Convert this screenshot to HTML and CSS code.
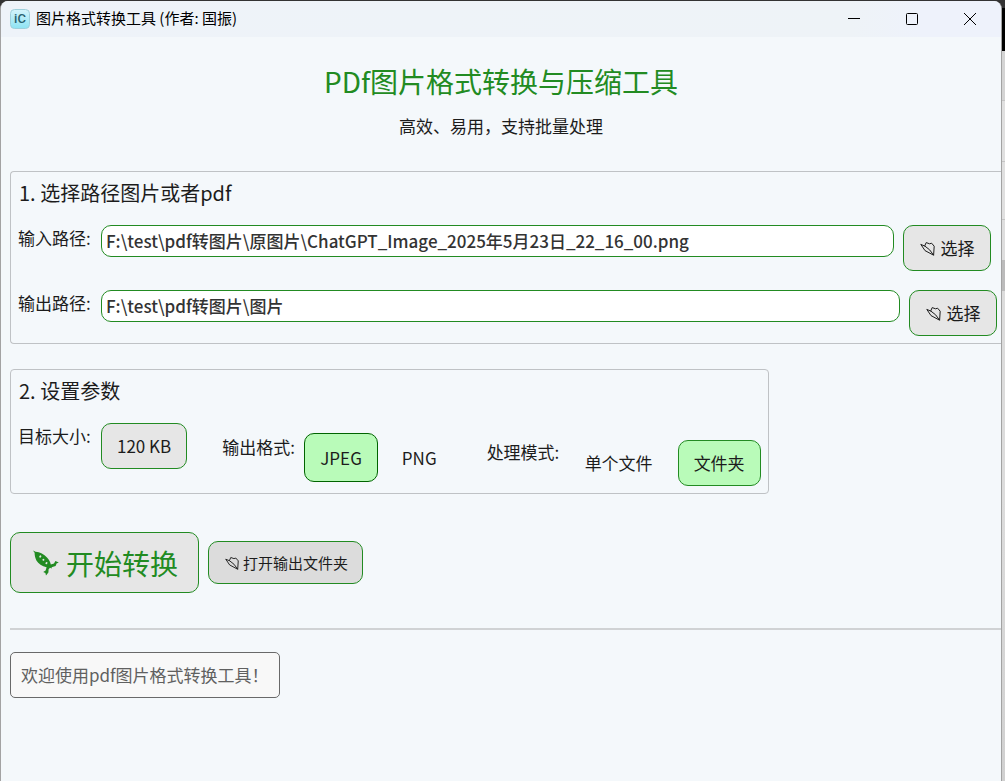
FILE: index.html
```html
<!DOCTYPE html>
<html lang="zh-CN">
<head>
<meta charset="utf-8">
<title>图片格式转换工具 (作者: 国振)</title>
<link rel="stylesheet" href="styles.css">
</head>
<body>
<svg class="defs" width="0" height="0" aria-hidden="true">
  <symbol id="folder" viewBox="0 0 15 15">
    <path d="M.8 3.4 5 9.6 13.6 14.2 14.2 5.2 11.6 2.2 9.6 2.8 6.2 1.6 4.6 5.2M.8 3.4 5 5.2 9.6 8.8 13.6 14.2" fill="none" stroke="currentColor" stroke-width="1" stroke-linejoin="round"/>
  </symbol>
  <symbol id="rocket" viewBox="0 0 26 26">
    <path fill="currentColor" fill-rule="evenodd" d="M0 .6 2.6 1.8C7 2.2 11 4.2 14 7.4 16.2 9.8 17.4 12 17.8 14.6L21 13.6 22.4 11 25.8 12.6 23.6 13.6 22.6 16 18.6 17.2 18.8 18.6 17 17.8 15.6 19.2 15.4 22.4 13 25.6 12.4 23 10.2 22 12.6 20.4 13.6 17.2C9 16.2 5.4 13.8 3.4 10.4 2.2 8.2 1.6 5.4 1.6 2.8ZM6.6 6A.9.9 0 1 0 8 7 .9.9 0 1 0 6.6 6ZM9.6 9.2A1 1 0 1 0 11.2 10.4 1 1 0 1 0 9.6 9.2ZM12.8 12.6A.9.9 0 1 0 14.2 13.6.9.9 0 1 0 12.8 12.6Z"/>
  </symbol>
</svg>
<div class="desktop">
  <div class="window">
    <header class="titlebar">
      <svg class="app-icon" viewBox="0 0 20 20" aria-hidden="true">
        <defs><linearGradient id="ice" x2="0" y2="1"><stop stop-color="#d5f4fb"/><stop offset="1" stop-color="#8ee3f3"/></linearGradient></defs>
        <rect x=".5" y=".5" width="19" height="19" rx="4" fill="url(#ice)" stroke="#9fd0dc"/>
        <text class="app-mark" x="10" y="14" text-anchor="middle">iC</text>
      </svg>
      <span class="caption">图片格式转换工具 (作者: 国振)</span>
      <div class="controls">
        <button aria-label="最小化"><svg viewBox="0 0 14 14"><path d="M1 6.5h12"/></svg></button>
        <button aria-label="最大化"><svg viewBox="0 0 14 14"><rect x="1.5" y="1.5" width="11" height="11" rx="1"/></svg></button>
        <button aria-label="关闭"><svg viewBox="0 0 14 14"><path d="m1 1 12 12M13 1 1 13"/></svg></button>
      </div>
    </header>
    <main class="content">
      <h1>PDf图片格式转换与压缩工具</h1>
      <p class="subtitle">高效、易用，支持批量处理</p>

      <section class="group paths">
        <h2>1. 选择路径图片或者pdf</h2>
        <div class="path-row first">
          <label for="in">输入路径:</label>
          <input id="in" type="text" value="F:\test\pdf转图片\原图片\ChatGPT_Image_2025年5月23日_22_16_00.png">
          <button class="btn"><svg class="folder"><use href="#folder"/></svg>选择</button>
        </div>
        <div class="path-row">
          <label for="out">输出路径:</label>
          <input id="out" type="text" value="F:\test\pdf转图片\图片">
          <button class="btn"><svg class="folder"><use href="#folder"/></svg>选择</button>
        </div>
      </section>

      <section class="group params">
        <h2>2. 设置参数</h2>
        <div class="param-row">
          <div class="param size">
            <span class="name" id="size-name">目标大小:</span>
            <button class="btn" aria-labelledby="size-name size-value"><span id="size-value">120 KB</span></button>
          </div>
          <div class="param format" role="group" aria-labelledby="format-name">
            <span class="name" id="format-name">输出格式:</span>
            <button class="btn on tall" aria-pressed="true">JPEG</button>
            <button class="btn flat tall" aria-pressed="false">PNG</button>
          </div>
          <div class="param mode" role="group" aria-labelledby="mode-name">
            <span class="name" id="mode-name">处理模式:</span>
            <button class="btn flat" aria-pressed="false">单个文件</button>
            <button class="btn on" aria-pressed="true">文件夹</button>
          </div>
        </div>
      </section>

      <div class="actions">
        <button class="btn start"><svg class="rocket"><use href="#rocket"/></svg>开始转换</button>
        <button class="btn open"><svg class="folder"><use href="#folder"/></svg>打开输出文件夹</button>
      </div>
      <hr>
      <output class="status">欢迎使用pdf图片格式转换工具！</output>
    </main>
  </div>
</div>
</body>
</html>
```
FILE: styles.css
```css
* { box-sizing: border-box; }
body {
  margin: 0;
  font: 17px/24px "Noto Sans CJK SC", sans-serif;
  color: #1c1c1c;
}
button, input { font: inherit; color: inherit; }
.defs { position: absolute; }
.desktop {
  min-height: 100vh;
  display: flex;
  padding: 1px 3px 0 0;
  background:
    linear-gradient(#000 0 0) right 8px / 3px 43px no-repeat,
    linear-gradient(#333 0 50px, #d4d4d4 50px 100px, #c4c4c4 100px 101px, #e0e0e0 101px 161px, #c4c4c4 161px 162px, #e0e0e0 162px 219px, #c4c4c4 219px 220px, #dedede 220px 260px, #bbb 260px 291px, #dcdcdc 291px 500px, #d0d0d0);
}
.window {
  flex: 1;
  min-width: 0;
  overflow: hidden;
  border: solid #a3a3a3;
  border-width: 0 1px;
  border-radius: 8px 8px 0 0;
  background: #f4f8fb;
}
.titlebar {
  display: flex;
  align-items: center;
  height: 36px;
  padding-left: 9px;
  background: linear-gradient(90deg, #eef3f9, #eef3f7 85%, #eef2fb 92%);
  font-size: 15px;
  line-height: 20px;
  color: #000;
}
.caption { padding-bottom: 2px; }
.app-icon { width: 20px; height: 20px; margin-right: 6px; }
.app-mark { font: 500 13px Roboto, sans-serif; fill: #28606e; }
.controls { display: flex; margin-left: auto; padding-right: 2px; }
.controls button {
  width: 58px;
  height: 36px;
  padding: 0;
  border: 0;
  background: none;
  display: grid;
  place-items: center;
}
.controls svg { width: 14px; height: 14px; fill: none; stroke: #000; stroke-width: 1; }
.content { padding: 24px 0 24px 9px; }
h1, h2, p { margin: 0; font-weight: 400; }
h1 { font-size: 28px; line-height: 40px; text-align: center; color: #228b22; padding-right: 9px; }
.subtitle { margin-top: 13px; text-align: center; padding-right: 9px; }
h2 { padding-left: 1px; font-size: 20px; line-height: 28px; }
.group { border: 1px solid #bfc2c5; border-radius: 4px; padding: 7px; }
.paths { margin-top: 33px; border-right: 0; border-radius: 4px 0 0 4px; padding-right: 4px; }
.path-row { display: flex; align-items: flex-start; gap: 9px; margin-top: 19px; }
.path-row.first { margin-top: 18px; padding-right: 6px; }
label, .name { width: 74px; flex: none; padding-top: 1px; white-space: nowrap; }
input {
  flex: 1;
  min-width: 0;
  height: 32px;
  padding: 0 4px 2px;
  border: 1px solid #228b22;
  border-radius: 10px;
  background: #fff;
  outline: 0;
  font-weight: 500;
  color: #333;
}
.btn {
  display: flex;
  align-items: center;
  justify-content: center;
  height: 46px;
  padding: 0 15px;
  border: 1px solid #228b22;
  border-radius: 10px;
  background: #e6e6e6;
  white-space: nowrap;
}
.path-row .btn { width: 88px; padding: 0; }
.folder { width: 15px; height: 15px; margin-right: 5px; }
.path-row .folder { margin-right: 6px; }
.btn.on { background: #b9fbb9; }
.btn.tall { height: 49px; }
.btn.tall.on { border-color: #006400; }
.btn.flat { border-color: transparent; background: none; }
.params { width: fit-content; margin-top: 25px; }
.param-row { display: flex; align-items: flex-start; margin-top: 18px; }
.param { display: flex; align-items: flex-start; }
.size { gap: 9px; }
.format { margin: 10px 0 0 35px; }
.format .name { width: 82px; padding-top: 2px; }
.format .flat { margin-left: 8px; }
.mode { margin: 17px 0 0 34px; }
.mode .name { width: 82px; padding-top: 0; }
.mode .on { margin-left: 9px; }
.actions { display: flex; align-items: center; gap: 9px; margin-top: 38px; }
.start { height: 61px; padding: 0 20px 0 22px; font-size: 28px; color: #228b22; }
.rocket { width: 26px; height: 26px; margin-right: 7px; }
.open { height: 43px; padding: 0 14px 0 16px; font-size: 15px; background: #dcdcdc; }
.open .folder { width: 14px; height: 14px; margin-right: 4px; }
hr { height: 2px; margin: 35px 0 22px; border: 0; background: #d0d2d4; }
.status {
  display: flex;
  align-items: center;
  width: fit-content;
  height: 46px;
  padding: 0 10px;
  border: 1px solid #696969;
  border-radius: 5px;
  background: #f8f8f8;
  color: #606060;
}
```
